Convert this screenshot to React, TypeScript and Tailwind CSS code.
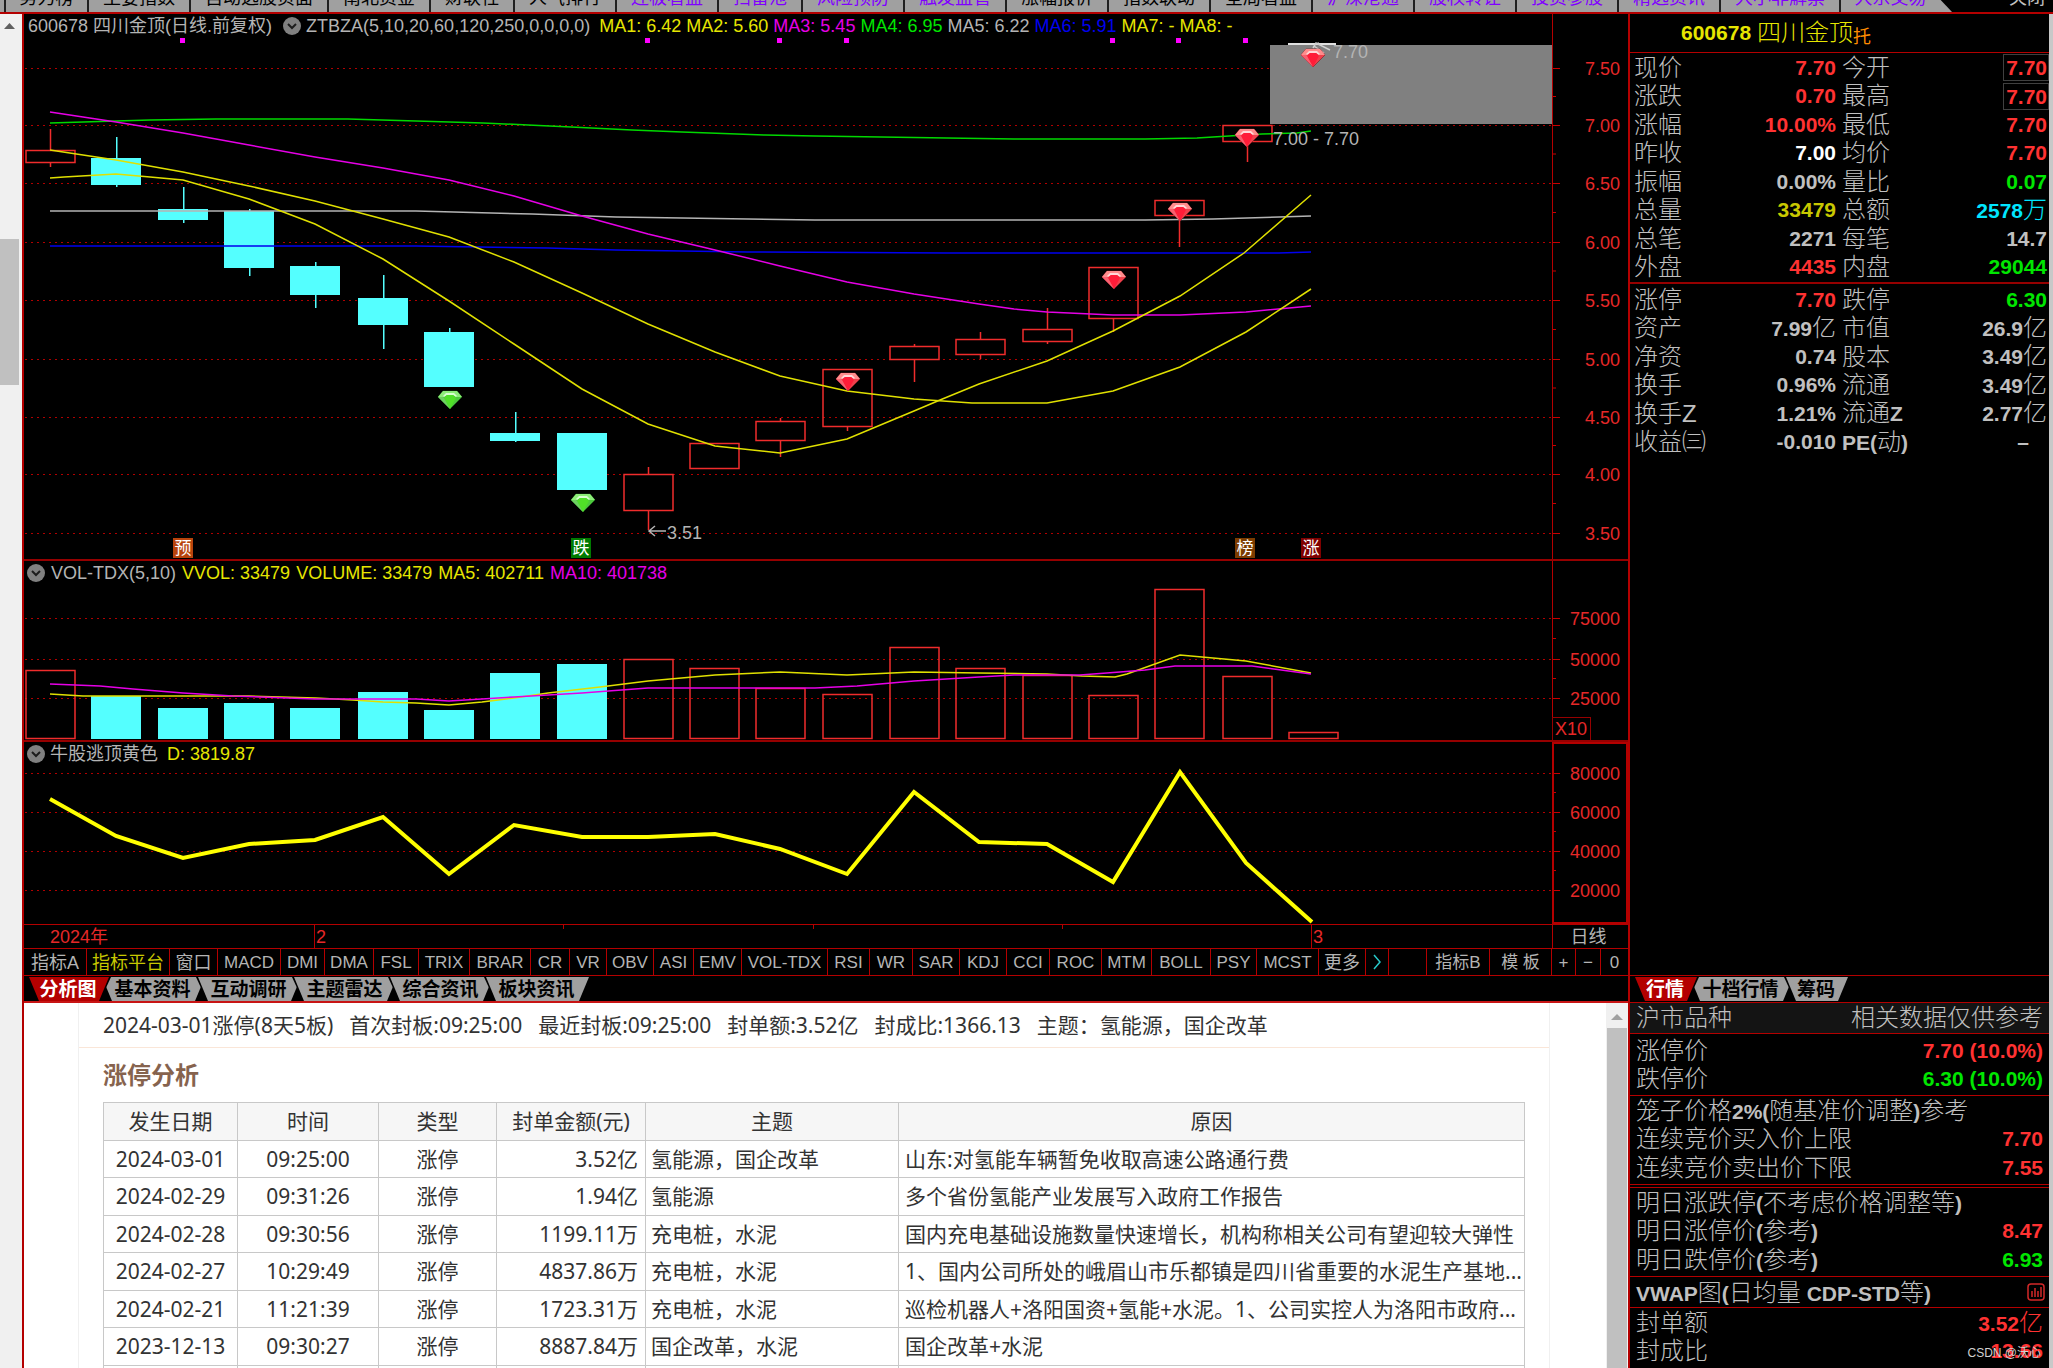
import clsx from "clsx";

const topTabs = [
  { label: "势力榜", w: "w-[83px]" },
  { label: "主要指数", w: "w-[102px]" },
  { label: "自动选股页面", w: "w-[138px]" },
  { label: "南北资金", w: "w-[102px]" },
  { label: "财联社", w: "w-[84px]" },
  { label: "人气排行", w: "w-[102px]" },
  { label: "连板看盘", w: "w-[102px]", hot: true },
  { label: "扫雷池", w: "w-[84px]", hot: true },
  { label: "风险预防", w: "w-[102px]", hot: true },
  { label: "触发监管", w: "w-[102px]", hot: true },
  { label: "涨幅报价", w: "w-[102px]" },
  { label: "指数联动", w: "w-[102px]" },
  { label: "全局看盘", w: "w-[102px]" },
  { label: "沪深港通", w: "w-[102px]", hot: true },
  { label: "股权转让", w: "w-[102px]", hot: true },
  { label: "投资参股", w: "w-[102px]", hot: true },
  { label: "精选资讯", w: "w-[102px]", hot: true },
  { label: "大小非解禁", w: "w-[120px]", hot: true },
];

type Candle = { x: number; up?: boolean; high: number; top: number; bottom: number; low: number; vol: number };

// all chart values are canvas coordinates
const candles: Candle[] = [
  { x: 50, up: true, high: 129, top: 150, bottom: 162, low: 167, vol: 671 },
  { x: 116, high: 137, top: 158, bottom: 185, low: 187, vol: 696 },
  { x: 183, high: 187, top: 209, bottom: 220, low: 223, vol: 708 },
  { x: 249, high: 209, top: 211, bottom: 268, low: 276, vol: 703 },
  { x: 315, high: 262, top: 266, bottom: 295, low: 308, vol: 708 },
  { x: 383, high: 275, top: 298, bottom: 325, low: 349, vol: 692 },
  { x: 449, high: 328, top: 332, bottom: 387, low: 387, vol: 710 },
  { x: 515, high: 412, top: 433, bottom: 441, low: 442, vol: 673 },
  { x: 582, high: 433, top: 433, bottom: 490, low: 490, vol: 664 },
  { x: 648, up: true, high: 467, top: 474, bottom: 510, low: 530, vol: 660 },
  { x: 714, up: true, high: 443, top: 443, bottom: 468, low: 468, vol: 669 },
  { x: 780, up: true, high: 418, top: 421, bottom: 440, low: 457, vol: 689 },
  { x: 847, up: true, high: 369, top: 369, bottom: 426, low: 431, vol: 695 },
  { x: 914, up: true, high: 344, top: 346, bottom: 359, low: 382, vol: 648 },
  { x: 980, up: true, high: 332, top: 339, bottom: 354, low: 359, vol: 669 },
  { x: 1047, up: true, high: 308, top: 329, bottom: 341, low: 344, vol: 676 },
  { x: 1113, up: true, high: 267, top: 267, bottom: 318, low: 332, vol: 696 },
  { x: 1179, up: true, high: 200, top: 200, bottom: 215, low: 247, vol: 590 },
  { x: 1247, up: true, high: 125, top: 125, bottom: 141, low: 162, vol: 677 },
];

const maLines = [
  { color: "#00d800", points: "50,123 83,122 116,121 150,120 216,119 348,119 416,121 483,123 528,125 571,127 632,130 682,132 765,135 815,136 947,138 1014,139 1145,139 1197,138 1229,136 1262,134 1297,133 1311,131" },
  { color: "#b4b4b4", points: "50,211 416,211 532,214 616,217 748,219 815,220 1145,220 1213,219 1279,217 1311,216" },
  { color: "#0000f0", points: "50,246 416,246 548,248 616,250 748,252 947,253 1279,253 1311,252" },
  { color: "#e600e6", points: "50,112 83,117 116,122 183,133 249,145 315,157 383,168 449,180 514,196 582,216 648,234 715,250 780,266 847,282 914,294 979,304 1014,309 1047,312 1113,315 1180,315 1246,312 1311,306" },
  { color: "#e0e000", points: "50,178 64,177 116,174 150,177 183,180 249,199 315,224 383,259 416,280 449,301 514,344 582,389 648,424 715,446 780,453 847,439 914,411 940,400 979,384 1047,361 1113,331 1180,296 1244,253 1311,195" },
  { color: "#e0e000", points: "50,150 116,160 183,172 249,186 315,201 383,219 449,237 514,262 582,293 648,324 715,352 780,376 847,391 914,399 972,403 1047,403 1113,391 1180,367 1246,332 1311,289" },
];

const volLines = [
  { color: "#e0e000", points: "50,694 83,696 249,696 316,698 353,700 383,702 416,703 449,705 482,702 514,698 548,693 600,687 648,681 715,675 780,672 847,675 914,672 979,673 1047,674 1082,676 1115,677 1127,674 1180,655 1246,661 1311,673" },
  { color: "#e600e6", points: "50,684 100,686 133,689 183,693 233,696 315,699 416,699 449,701 482,699 514,697 582,693 648,688 815,688 857,686 914,681 979,677 1014,675 1080,675 1120,672 1145,670 1175,666 1252,666 1311,674" },
];

const priceTicks = [
  { y: 68, label: "7.50" },
  { y: 125, label: "7.00" },
  { y: 183, label: "6.50" },
  { y: 242, label: "6.00" },
  { y: 300, label: "5.50" },
  { y: 359, label: "5.00" },
  { y: 417, label: "4.50" },
  { y: 474, label: "4.00" },
  { y: 533, label: "3.50" },
];
const volTicks = [
  { y: 618, label: "75000" },
  { y: 659, label: "50000" },
  { y: 698, label: "25000" },
];
const indTicks = [
  { y: 773, label: "80000" },
  { y: 812, label: "60000" },
  { y: 851, label: "40000" },
  { y: 890, label: "20000" },
];

const gems = [
  { x: 450, y: 400, green: true },
  { x: 583, y: 503, green: true },
  { x: 848, y: 382 },
  { x: 1114, y: 280 },
  { x: 1180, y: 212 },
  { x: 1247, y: 138 },
  { x: 1313, y: 58 },
];

const badges = [
  { x: 183, text: "预", fill: "#b8430c" },
  { x: 581, text: "跌", fill: "#007a00" },
  { x: 1245, text: "榜", fill: "#7c3c00" },
  { x: 1311, text: "涨", fill: "#800000" },
];

const toolbar = [
  { label: "指标A", w: "w-[63px]" },
  { label: "指标平台", w: "w-[83px]", active: true },
  { label: "窗口", w: "w-[48px]" },
  { label: "MACD", w: "w-[63px]" },
  { label: "DMI", w: "w-[44px]" },
  { label: "DMA", w: "w-[49px]" },
  { label: "FSL", w: "w-[45px]" },
  { label: "TRIX", w: "w-[51px]" },
  { label: "BRAR", w: "w-[61px]" },
  { label: "CR", w: "w-[39px]" },
  { label: "VR", w: "w-[37px]" },
  { label: "OBV", w: "w-[47px]" },
  { label: "ASI", w: "w-[40px]" },
  { label: "EMV", w: "w-[48px]" },
  { label: "VOL-TDX", w: "w-[86px]" },
  { label: "RSI", w: "w-[42px]" },
  { label: "WR", w: "w-[43px]" },
  { label: "SAR", w: "w-[47px]" },
  { label: "KDJ", w: "w-[47px]" },
  { label: "CCI", w: "w-[43px]" },
  { label: "ROC", w: "w-[52px]" },
  { label: "MTM", w: "w-[50px]" },
  { label: "BOLL", w: "w-[59px]" },
  { label: "PSY", w: "w-[46px]" },
  { label: "MCST", w: "w-[62px]" },
  { label: "更多", w: "w-[47px]" },
];
const toolbarRight = [
  { label: "指标B", w: "w-[63px]" },
  { label: "模 板", w: "w-[62px]" },
  { label: "+", w: "w-[24px]" },
  { label: "−", w: "w-[25px]" },
  { label: "0", w: "w-[27px]" },
];

const RED = "text-[#ff3232]";
const GREEN = "text-[#00e600]";
const GRAY = "text-[#c0c0c0]";

type QuoteRow = [string, string, string, string, string, string, boolean?];
const quoteTop: QuoteRow[] = [
  ["现价", "7.70", RED, "今开", "7.70", RED, true],
  ["涨跌", "0.70", RED, "最高", "7.70", RED, true],
  ["涨幅", "10.00%", RED, "最低", "7.70", RED],
  ["昨收", "7.00", "text-white", "均价", "7.70", RED],
  ["振幅", "0.00%", GRAY, "量比", "0.07", GREEN],
  ["总量", "33479", "text-[#c8c800]", "总额", "2578万", "text-[#00e6ff]"],
  ["总笔", "2271", GRAY, "每笔", "14.7", GRAY],
  ["外盘", "4435", RED, "内盘", "29044", GREEN],
];
const quoteBottom: QuoteRow[] = [
  ["涨停", "7.70", RED, "跌停", "6.30", GREEN],
  ["资产", "7.99亿", GRAY, "市值", "26.9亿", GRAY],
  ["净资", "0.74", GRAY, "股本", "3.49亿", GRAY],
  ["换手", "0.96%", GRAY, "流通", "3.49亿", GRAY],
  ["换手Z", "1.21%", GRAY, "流通Z", "2.77亿", GRAY],
  ["收益㈢", "-0.010", GRAY, "PE(动)", "–", GRAY],
];

const limitRows = [
  ["2024-03-01", "09:25:00", "涨停", "3.52亿", "氢能源，国企改革", "山东:对氢能车辆暂免收取高速公路通行费"],
  ["2024-02-29", "09:31:26", "涨停", "1.94亿", "氢能源", "多个省份氢能产业发展写入政府工作报告"],
  ["2024-02-28", "09:30:56", "涨停", "1199.11万", "充电桩，水泥", "国内充电基础设施数量快速增长，机构称相关公司有望迎较大弹性"],
  ["2024-02-27", "10:29:49", "涨停", "4837.86万", "充电桩，水泥", "1、国内公司所处的峨眉山市乐都镇是四川省重要的水泥生产基地..."],
  ["2024-02-21", "11:21:39", "涨停", "1723.31万", "充电桩，水泥", "巡检机器人+洛阳国资+氢能+水泥。1、公司实控人为洛阳市政府..."],
  ["2023-12-13", "09:30:27", "涨停", "8887.84万", "国企改革，水泥", "国企改革+水泥"],
  ["", "", "", "", "", ""],
];

const Gem = ({ x, y, green }: { x: number; y: number; green?: boolean }) => (
  <g transform={`translate(${x - 12} ${y - 9})`}>
    <path d="M5 0h14l5 6-12 12L0 6z" fill={green ? "#4cc83c" : "#f0404c"} stroke={green ? "#1c5a18" : "#7a1820"} strokeWidth="0.6" />
    <path d="M5 0h14l5 6h-5l-3-2H8L5 6H0z" fill={green ? "#8cec78" : "#ff8c8c"} />
    <path d="M5 5l3-3h8l3 3-1 1-3-2H9L6 6z" fill={green ? "#d8ffd0" : "#ffd8d8"} />
    <path d="M6 7l3-3h6l3 3-6 11z" fill={green ? "#50e028" : "#ff1c38"} />
    <path d="M0 6h5l1 1 6 11z" fill={green ? "#6cd060" : "#f86070"} />
  </g>
);

const Grid = ({ ticks }: { ticks: { y: number }[] }) => (
  <g stroke="#b00000" strokeWidth="1" strokeDasharray="2 4" shapeRendering="crispEdges">
    {ticks.map((t) => (
      <line key={t.y} x1="25" x2="1552" y1={t.y + 0.5} y2={t.y + 0.5} />
    ))}
  </g>
);

const Axis = ({ ticks, top, height }: { ticks: { y: number; label: string }[]; top: number; height: number }) => (
  <svg viewBox={`1552 ${top} 76 ${height}`} width="76" height={height} className="block shrink-0">
    <line x1="1552.5" x2="1552.5" y1={top} y2={top + height} stroke="#b40000" />
    {ticks.map((t, i) => (
      <g key={t.y}>
        <line x1="1553" x2="1560" y1={t.y + 0.5} y2={t.y + 0.5} stroke="#c80000" />
        {i < ticks.length - 1 && (
          <line x1="1553" x2="1556" y1={(t.y + ticks[i + 1].y) / 2} y2={(t.y + ticks[i + 1].y) / 2} stroke="#c80000" />
        )}
        <text x="1620" y={t.y + 7} textAnchor="end" className="fill-[#e62828] text-[18px]">
          {t.label}
        </text>
      </g>
    ))}
  </svg>
);

const Toggle = () => (
  <button aria-label="指标菜单" className="flex size-[18px] items-center justify-center rounded-full bg-[#808080]">
    <svg viewBox="0 0 12 12" className="size-3">
      <path d="M2 4l4 4 4-4" fill="none" stroke="#1c1c1c" strokeWidth="2" />
    </svg>
  </button>
);

const Tab = ({ label, active, className }: { label: string; active?: boolean; className?: string }) => (
  <button
    className={clsx(
      "relative h-6 bg-black [clip-path:polygon(0_0,100%_0,calc(100%-11px)_100%,11px_100%)]",
      active && "z-10",
      className
    )}
  >
    <span
      className={clsx(
        "mx-0.5 flex h-6 items-center justify-center pt-0.5 pr-0.5 text-[19px] font-bold whitespace-nowrap [clip-path:polygon(0_0,100%_0,calc(100%-10px)_100%,10px_100%)]",
        active ? "bg-[#b40000] text-white" : "bg-[#a0a0a0] text-black"
      )}
    >
      {label}
    </span>
  </button>
);

const QuoteTable = ({ rows }: { rows: QuoteRow[] }) => (
  <table className="w-full table-fixed border-collapse leading-[26px]">
    <colgroup>
      <col className="w-[82px]" />
      <col className="w-[124px]" />
      <col className="w-[88px]" />
      <col />
    </colgroup>
    <tbody>
      {rows.map(([l1, v1, c1, l2, v2, c2, boxed]) => (
        <tr key={l1} className="odd:h-[29px] even:h-[28px]">
          <th scope="row" className="p-0 pl-1 text-left text-[24px] font-light whitespace-nowrap text-[#c0c0c0]">{l1}</th>
          <td className={clsx("p-0 text-right text-[21px] font-bold", c1)}><Mixed text={v1} /></td>
          <th scope="row" className="p-0 pl-1.5 text-left text-[24px] font-light whitespace-nowrap text-[#c0c0c0]">
            <Mixed text={l2} />
          </th>
          <td className={clsx("p-0 text-right text-[21px] font-bold", c2)}>
            {boxed ? (
              <span className="inline-block h-[27px] border border-[#404040] pr-px pl-0.5 align-top leading-[25px]">{v2}</span>
            ) : (
              <span className={v2 === "–" ? "pr-5" : "pr-0.5"}><Mixed text={v2} /></span>
            )}
          </td>
        </tr>
      ))}
    </tbody>
  </table>
);

// Latin runs are drawn bold and a bit smaller than the Chinese ones
const Mixed = ({ text }: { text: string }) => (
  <>
    {(text.match(/[\x00-\x7f–]+|[^\x00-\x7f–]+/g) || []).map((part, i) => (
      <span key={i} className={/[\x00-\x7f–]/.test(part) ? "text-[21px] font-bold" : "text-[24px] font-light"}>
        {part}
      </span>
    ))}
  </>
);

const InfoRow = ({ label, value, color }: { label: string; value?: string; color?: string }) => (
  <div className="flex justify-between pr-1.5 pl-1.5 text-[#c0c0c0] odd:h-[29px] odd:leading-[29px] even:h-[28px] even:leading-[28px]">
    <span className="whitespace-nowrap"><Mixed text={label} /></span>
    {value && <span className={clsx("whitespace-nowrap", color)}><Mixed text={value} /></span>}
  </div>
);

const App = () => {
  return (
    <div className="flex h-screen flex-col overflow-hidden bg-black font-['Liberation_Sans','Noto_Sans_CJK_SC',sans-serif]">
      <nav className="flex h-[14px] shrink-0 items-end overflow-hidden border-b-2 border-[#b40000] text-[18px] leading-[20px]">
        <div className="h-3 w-1 bg-[#a0a0a0]" />
        {topTabs.map((t) => (
          <button
            key={t.label}
            className={clsx("flex h-3 shrink-0 items-end justify-center border-l-2 border-[#202020] bg-[#a0a0a0] pb-1 whitespace-nowrap", t.w, t.hot ? "text-[#8000ff]" : "text-black")}
          >
            {t.label}
          </button>
        ))}
        <button className="flex h-3 w-[113px] shrink-0 items-end justify-center border-l-2 border-[#202020] bg-[#a0a0a0] pr-3 pb-1 text-[#8000ff] [clip-path:polygon(0_0,90%_0,100%_100%,0_100%)]">
          大宗交易
        </button>
        <button className="ml-auto flex h-3 items-end pr-2 pb-1 text-[#c0c0c0]">关闭</button>
      </nav>

      <div className="flex min-h-0 flex-1">
        {/* left scrollbar */}
        <div className="flex w-[22px] shrink-0 flex-col bg-[#f0f0f0]">
          <svg viewBox="0 0 20 24" className="h-6 w-5">
            <path d="M4 15h11L9.500 9z" fill="#606060" />
          </svg>
          <div className="mt-[201px] h-[146px] w-[19px] bg-[#c0c0c0]" />
        </div>

        <main className="flex min-w-0 flex-1 flex-col border-l-2 border-[#b40000]">
          <section className="relative flex h-[547px] shrink-0 border-b-2 border-[#960000]">
            <svg viewBox="24 14 1528 545" preserveAspectRatio="none" className="block h-[545px] min-w-0 flex-1">
              <Grid ticks={priceTicks} />
              <rect x="1270" y="45" width="282" height="79" fill="#808080" />
              {candles.map((c) =>
                c.up ? (
                  <g key={c.x} stroke="#f02c2c" strokeWidth="1.500" fill="none">
                    <path d={`M${c.x + 0.5} ${c.high}V${c.top}M${c.x + 0.5} ${c.bottom}V${c.low}`} />
                    <rect x={c.x - 24} y={c.top + 0.5} width="49" height={c.bottom - c.top} />
                  </g>
                ) : (
                  <g key={c.x} fill="#54ffff">
                    <rect x={c.x} y={c.high} width="1.500" height={c.low - c.high} />
                    <rect x={c.x - 25} y={c.top} width="50" height={c.bottom - c.top} />
                  </g>
                )
              )}
              {maLines.map((l, i) => (
                <polyline key={i} points={l.points} fill="none" stroke={l.color} strokeWidth="1.500" />
              ))}
              <rect x="1288" y="43" width="48" height="2" fill="#e0e0e0" />
              <path d="M1315 44l4-1M1313 48l3-5 14 7M1314 46l10 7" fill="none" stroke="#d0d0d0" strokeWidth="1.500" />
              {gems.map((g) => (
                <Gem key={g.x} {...g} />
              ))}
              {[182, 647, 779, 846, 1112, 1178, 1245].map((x) => (
                <rect key={x} x={x - 2} y="38" width="5" height="5" fill="#ff00ff" />
              ))}
              <path d="M666 531H649M655 526l-6 5 6 5" fill="none" stroke="#b4b4b4" strokeWidth="1.500" />
              <g className="fill-[#b4b4b4] text-[18px]">
                <text x="667" y="539">3.51</text>
                <text x="1333" y="58">7.70</text>
                <text x="1273" y="145">7.00 - 7.70</text>
              </g>
              {badges.map((b) => (
                <g key={b.text}>
                  <rect x={b.x - 10} y="538" width="20" height="20" fill={b.fill} />
                  <text x={b.x} y="554" textAnchor="middle" className="fill-white text-[17px]">{b.text}</text>
                </g>
              ))}
            </svg>
            <Axis ticks={priceTicks} top={14} height={545} />
            <div className="absolute top-0 left-1 flex h-6 items-center gap-[5px] text-[18px] leading-6 whitespace-nowrap text-[#b4b4b4]">
              <span className="pr-1.5">600678 四川金顶(日线.前复权)</span>
              <Toggle />
              <span className="pr-1">ZTBZA(5,10,20,60,120,250,0,0,0,0)</span>
              <span className="text-[#e6e600]">MA1: 6.42</span>
              <span className="text-[#e6e600]">MA2: 5.60</span>
              <span className="text-[#e600e6]">MA3: 5.45</span>
              <span className="text-[#00e600]">MA4: 6.95</span>
              <span>MA5: 6.22</span>
              <span className="text-[#0000f0]">MA6: 5.91</span>
              <span className="text-[#e6e600]">MA7: -</span>
              <span className="text-[#e6e600]">MA8: -</span>
            </div>
          </section>

          <section className="relative flex h-[181px] shrink-0 border-b-2 border-[#960000]">
            <svg viewBox="24 561 1528 179" preserveAspectRatio="none" className="block h-[179px] min-w-0 flex-1">
              <Grid ticks={volTicks} />
              {candles.map((c) =>
                c.up ? (
                  <rect key={c.x} x={c.x - 24} y={c.vol - 0.5} width="49" height={739 - c.vol} fill="none" stroke="#f02c2c" strokeWidth="1.500" />
                ) : (
                  <rect key={c.x} x={c.x - 25} y={c.vol} width="50" height={739 - c.vol} fill="#54ffff" />
                )
              )}
              <rect x="1289" y="732.500" width="49" height="6" fill="none" stroke="#f02c2c" strokeWidth="1.500" />
              {volLines.map((l) => (
                <polyline key={l.color} points={l.points} fill="none" stroke={l.color} strokeWidth="1.500" />
              ))}
            </svg>
            <Axis ticks={volTicks} top={561} height={179} />
            <div className="absolute right-[37px] bottom-0 h-[23px] w-[39px] border border-b-0 border-[#960000] pl-0.5 text-[18px] leading-[22px] text-[#e62828]">X10</div>
            <div className="absolute top-0 left-[3px] flex h-6 items-center gap-1.5 text-[18px] leading-6 whitespace-nowrap text-[#b4b4b4]">
              <Toggle />
              <span>VOL-TDX(5,10)</span>
              <span className="text-[#e6e600]">VVOL: 33479</span>
              <span className="text-[#e6e600]">VOLUME: 33479</span>
              <span className="text-[#e6e600]">MA5: 402711</span>
              <span className="text-[#e600e6]">MA10: 401738</span>
            </div>
          </section>

          <section className="relative flex h-[183px] shrink-0 border-b border-[#b40000]">
            <svg viewBox="24 742 1528 182" preserveAspectRatio="none" className="block h-[182px] min-w-0 flex-1">
              <Grid ticks={indTicks} />
              <polyline
                points="50,799 116,836 183,858 249,844 315,840 383,817 449,874 514,825 582,837 648,837 715,834 780,849 847,874 914,792 979,842 1047,844 1113,882 1180,772 1246,863 1312,922"
                fill="none"
                stroke="#ffff00"
                strokeWidth="4"
              />
            </svg>
            <div className="relative">
              <Axis ticks={indTicks} top={742} height={182} />
              <div className="absolute inset-0 border-2 border-[#b40000]" />
            </div>
            <div className="absolute top-0 left-[3px] flex h-6 items-center gap-[5px] text-[18px] leading-6 whitespace-nowrap text-[#b4b4b4]">
              <Toggle />
              <span className="pr-1">牛股逃顶黄色</span>
              <span className="text-[#e6e600]">D: 3819.87</span>
            </div>
          </section>

          <div className="flex h-6 shrink-0 border-b border-[#b40000] text-[18px] leading-6">
            <svg viewBox="24 925 1528 23" preserveAspectRatio="none" className="block h-[23px] min-w-0 flex-1">
              <path d="M314.500 925v23M1311.500 925v23M563.500 925v4M813.500 925v4M1062.500 925v4" stroke="#b40000" />
              <g className="fill-[#e62828] text-[18px]">
                <text x="50" y="943">2024年</text>
                <text x="316" y="943">2</text>
                <text x="1313" y="943">3</text>
              </g>
            </svg>
            <div className="w-[76px] border-l border-[#b40000] pr-1 text-center text-[#b4b4b4]">日线</div>
          </div>

          <div className="flex h-[27px] shrink-0 border-b border-[#b40000] text-[17px] leading-[26px] text-[#b4b4b4]">
            {toolbar.map((t) => (
              <button key={t.label} className={clsx("shrink-0 border-r border-[#b40000] pt-px whitespace-nowrap", t.w, t.active && "text-[#c8c800]", /[^\x00-\x7f]/.test(t.label) && "text-[18px]")}>
                {t.label}
              </button>
            ))}
            <button aria-label="下一页" className="flex w-[23px] shrink-0 items-center justify-center border-r border-[#b40000]">
              <svg viewBox="0 0 10 16" className="h-4 w-2.5">
                <path d="M2 1l6 7-6 7" fill="none" stroke="#28c8c8" strokeWidth="1.500" />
              </svg>
            </button>
            <div className="flex-1 border-r border-[#b40000]" />
            {toolbarRight.map((t) => (
              <button key={t.label} className={clsx("shrink-0 border-r border-[#b40000] pt-px whitespace-nowrap last:border-r-0", t.w)}>
                {t.label}
              </button>
            ))}
          </div>

          <div className="flex h-[27px] shrink-0 items-start border-b-2 border-[#c81414] pt-px pl-[3px]">
            <Tab label="分析图" active className="w-[84px]" />
            {["基本资料", "互动调研", "主题雷达", "综合资讯", "板块资讯"].map((t) => (
              <Tab key={t} label={t} className="-ml-[11px] w-[107px]" />
            ))}
          </div>

          <div className="flex min-h-0 flex-1 bg-white font-['Noto_Sans','Noto_Sans_CJK_SC',sans-serif] text-[21px] text-[#333]">
            <div className="min-w-0 flex-1 overflow-hidden pr-14 pl-[54px]">
              <div className="border-x border-[#f0f0f0]">
                <div className="flex h-[45px] items-center gap-4 border-b border-[#fae6d8] pl-6 leading-[44px] whitespace-nowrap">
                  <span>2024-03-01涨停(8天5板)</span>
                  <span>首次封板:09:25:00</span>
                  <span>最近封板:09:25:00</span>
                  <span>封单额:3.52亿</span>
                  <span>封成比:1366.13</span>
                  <span>主题：氢能源，国企改革</span>
                </div>
                <div className="pr-6 pl-6">
                  <h2 className="h-[54px] text-[24px] leading-[54px] font-bold text-[#86634e]">涨停分析</h2>
                  <table className="w-full table-fixed border-collapse leading-[35px]">
                    <colgroup>
                      <col className="w-[134px]" />
                      <col className="w-[141px]" />
                      <col className="w-[118px]" />
                      <col className="w-[149px]" />
                      <col className="w-[253px]" />
                      <col />
                    </colgroup>
                    <thead>
                      <tr className="h-[38px] bg-[#f6f6f6]">
                        {["发生日期", "时间", "类型", "封单金额(元)", "主题", "原因"].map((h) => (
                          <th key={h} scope="col" className="border border-[#c8c8c8] p-0 font-normal">{h}</th>
                        ))}
                      </tr>
                    </thead>
                    <tbody>
                      {limitRows.map((r) => (
                        <tr key={r[0]} className="odd:h-[37px] even:h-[38px]">
                          <td className="border border-[#c8c8c8] p-0 text-center">{r[0]}</td>
                          <td className="border border-[#c8c8c8] p-0 text-center">{r[1]}</td>
                          <td className="border border-[#c8c8c8] p-0 text-center">{r[2]}</td>
                          <td className="border border-[#c8c8c8] p-0 pr-[7px] text-right">{r[3]}</td>
                          <td className="border border-[#c8c8c8] p-0 pl-[5px]">{r[4]}</td>
                          <td className="overflow-hidden border border-[#c8c8c8] p-0 pl-1.5 whitespace-nowrap">{r[5]}</td>
                        </tr>
                      ))}
                    </tbody>
                  </table>
                </div>
              </div>
            </div>
            <div className="flex w-[22px] shrink-0 flex-col items-center bg-[#f0f0f0]">
              <svg viewBox="0 0 20 25" className="h-[25px] w-5">
                <path d="M4 17h12l-6-6z" fill="#a0a0a0" />
              </svg>
              <div className="w-5 flex-1 bg-[#c0c0c0]" />
            </div>
          </div>
        </main>

        <aside className="flex w-[421px] shrink-0 flex-col border-l-2 border-[#b40000]">
          <div className="h-[962px] shrink-0 border-b border-[#b40000]">
            <h1 className="flex h-[39px] items-center border-b border-[#b40000] pl-[51px] whitespace-nowrap text-[#e6e600]">
              <span className="text-[21px] font-bold">600678</span>
              <span className="pl-1.5 text-[24px] font-light">四川金顶</span>
              <span className="pt-2 text-[18px] font-normal text-[#ff8c00]">托</span>
            </h1>
            <div className="border-b-2 border-[#960000] pb-px">
              <QuoteTable rows={quoteTop} />
            </div>
            <div className="pt-px">
              <QuoteTable rows={quoteBottom} />
            </div>
          </div>
          <div className="flex h-[27px] shrink-0 items-start border-b border-[#b40000] pt-px pl-[3px]">
            <Tab label="行情" active className="w-[66px]" />
            <Tab label="十档行情" className="-ml-[11px] w-[107px]" />
            <Tab label="筹码" className="-ml-[11px] w-[66px]" />
          </div>
          <div className="h-[31px] shrink-0 border-b border-[#b40000] bg-[#141414]">
            <InfoRow label="沪市品种" value="相关数据仅供参考" />
          </div>
          <div className="shrink-0 border-b border-[#b40000] py-0.5">
            <InfoRow label="涨停价" value="7.70 (10.0%)" color={RED} />
            <InfoRow label="跌停价" value="6.30 (10.0%)" color={GREEN} />
          </div>
          <div className="shrink-0 border-b-4 border-double border-[#b40000] pb-0.5">
            <InfoRow label="笼子价格2%(随基准价调整)参考" />
            <InfoRow label="连续竞价买入价上限" value="7.70" color={RED} />
            <InfoRow label="连续竞价卖出价下限" value="7.55" color={RED} />
          </div>
          <div className="shrink-0 border-b border-[#b40000] pb-0.5">
            <InfoRow label="明日涨跌停(不考虑价格调整等)" />
            <InfoRow label="明日涨停价(参考)" value="8.47" color={RED} />
            <InfoRow label="明日跌停价(参考)" value="6.93" color={GREEN} />
          </div>
          <div className="flex h-[31px] shrink-0 items-center justify-between border-b border-[#b40000] pr-1">
            <InfoRow label="VWAP图(日均量 CDP-STD等)" />
            <button aria-label="VWAP图">
              <svg viewBox="0 0 18 18" className="size-[18px]" fill="none" stroke="#d22828" strokeWidth="1.500">
                <rect x="1" y="1" width="16" height="16" rx="3" />
                <path d="M5 8v6M8 5v9M11 8v6M14 4v10" />
              </svg>
            </button>
          </div>
          <div className="relative shrink-0">
            <InfoRow label="封单额" value="3.52亿" color={RED} />
            <InfoRow label="封成比" value="13.66" color={RED} />
            <span className="absolute right-2 bottom-1 text-[12px] leading-4 text-[#d0d0d0]">CSDN @沃心</span>
          </div>
        </aside>
        <div className="w-1 shrink-0 bg-[#c8c8c8]" />
      </div>
    </div>
  );
};

export default App;
